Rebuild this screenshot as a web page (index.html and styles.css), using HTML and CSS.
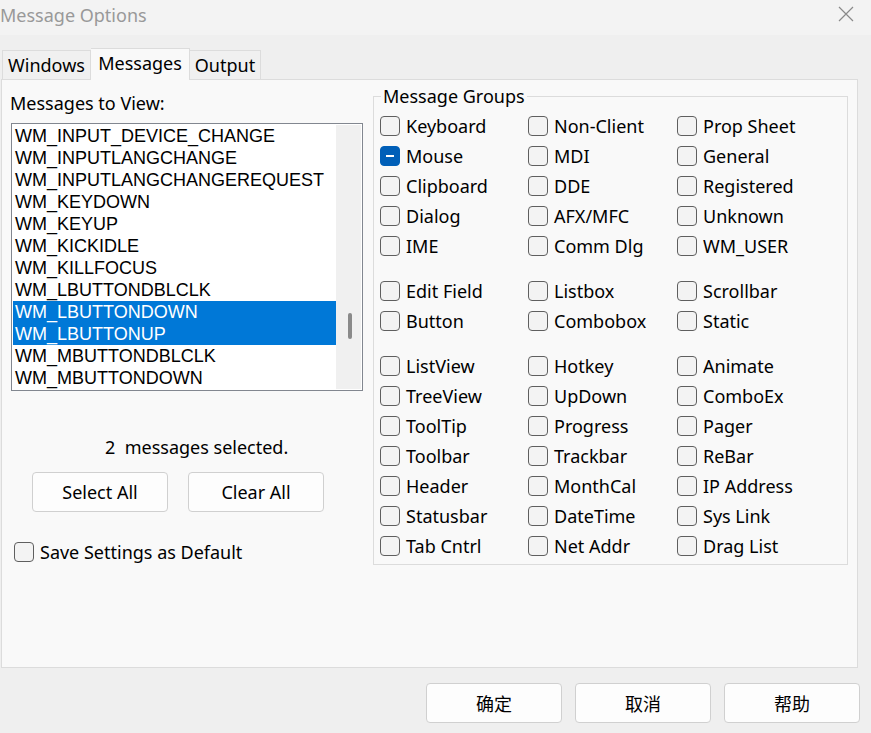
FILE: index.html
```html
<!DOCTYPE html>
<html lang="en">
<head>
    <meta charset="UTF-8">
    <title>Message Options</title>
    <link rel="stylesheet" href="styles.css">
</head>
<body>

    <div class="titlebar">
        <span class="title">Message Options</span>
        <svg class="close" width="16" height="16" viewBox="0 0 16 16">
            <path d="M1 1 L15 15 M15 1 L1 15" stroke="#8a8a8a" stroke-width="1.2" fill="none"/>
        </svg>
    </div>

    <div class="dialog">
        <div class="tabs">
            <div class="tab tab-windows">Windows</div>
            <div class="tab tab-messages active">Messages</div>
            <div class="tab tab-output">Output</div>
        </div>

        <div class="panel">
            <div class="left">
                <div class="label">Messages to View:</div>
                <div class="listbox">
                    <div class="items">
                        <div class="item">WM_INPUT_DEVICE_CHANGE</div>
                        <div class="item">WM_INPUTLANGCHANGE</div>
                        <div class="item">WM_INPUTLANGCHANGEREQUEST</div>
                        <div class="item">WM_KEYDOWN</div>
                        <div class="item">WM_KEYUP</div>
                        <div class="item">WM_KICKIDLE</div>
                        <div class="item">WM_KILLFOCUS</div>
                        <div class="item">WM_LBUTTONDBLCLK</div>
                        <div class="item selected">WM_LBUTTONDOWN</div>
                        <div class="item selected">WM_LBUTTONUP</div>
                        <div class="item">WM_MBUTTONDBLCLK</div>
                        <div class="item">WM_MBUTTONDOWN</div>
                    </div>
                    <div class="scrollbar"><div class="thumb"></div></div>
                </div>
                <div class="count">2&nbsp; messages selected.</div>
                <div class="btn-row">
                    <button class="btn">Select All</button>
                    <button class="btn">Clear All</button>
                </div>
                <label class="check save">
                    <span class="box"></span>
                    <span>Save Settings as Default</span>
                </label>
            </div>

            <fieldset class="groups">
                <legend>Message Groups</legend>

                <div class="grid">
                    <label class="check"><span class="box"></span>Keyboard</label>
                    <label class="check"><span class="box"></span>Non-Client</label>
                    <label class="check"><span class="box"></span>Prop Sheet</label>
                    <label class="check"><span class="box mixed"></span>Mouse</label>
                    <label class="check"><span class="box"></span>MDI</label>
                    <label class="check"><span class="box"></span>General</label>
                    <label class="check"><span class="box"></span>Clipboard</label>
                    <label class="check"><span class="box"></span>DDE</label>
                    <label class="check"><span class="box"></span>Registered</label>
                    <label class="check"><span class="box"></span>Dialog</label>
                    <label class="check"><span class="box"></span>AFX/MFC</label>
                    <label class="check"><span class="box"></span>Unknown</label>
                    <label class="check"><span class="box"></span>IME</label>
                    <label class="check"><span class="box"></span>Comm Dlg</label>
                    <label class="check"><span class="box"></span>WM_USER</label>
                </div>

                <div class="grid">
                    <label class="check"><span class="box"></span>Edit Field</label>
                    <label class="check"><span class="box"></span>Listbox</label>
                    <label class="check"><span class="box"></span>Scrollbar</label>
                    <label class="check"><span class="box"></span>Button</label>
                    <label class="check"><span class="box"></span>Combobox</label>
                    <label class="check"><span class="box"></span>Static</label>
                </div>

                <div class="grid">
                    <label class="check"><span class="box"></span>ListView</label>
                    <label class="check"><span class="box"></span>Hotkey</label>
                    <label class="check"><span class="box"></span>Animate</label>
                    <label class="check"><span class="box"></span>TreeView</label>
                    <label class="check"><span class="box"></span>UpDown</label>
                    <label class="check"><span class="box"></span>ComboEx</label>
                    <label class="check"><span class="box"></span>ToolTip</label>
                    <label class="check"><span class="box"></span>Progress</label>
                    <label class="check"><span class="box"></span>Pager</label>
                    <label class="check"><span class="box"></span>Toolbar</label>
                    <label class="check"><span class="box"></span>Trackbar</label>
                    <label class="check"><span class="box"></span>ReBar</label>
                    <label class="check"><span class="box"></span>Header</label>
                    <label class="check"><span class="box"></span>MonthCal</label>
                    <label class="check"><span class="box"></span>IP Address</label>
                    <label class="check"><span class="box"></span>Statusbar</label>
                    <label class="check"><span class="box"></span>DateTime</label>
                    <label class="check"><span class="box"></span>Sys Link</label>
                    <label class="check"><span class="box"></span>Tab Cntrl</label>
                    <label class="check"><span class="box"></span>Net Addr</label>
                    <label class="check"><span class="box"></span>Drag List</label>
                </div>
            </fieldset>
        </div>

        <div class="footer">
            <button class="btn cjk">确定</button>
            <button class="btn cjk">取消</button>
            <button class="btn cjk">帮助</button>
        </div>
    </div>

</body>
</html>
```

FILE: styles.css
```css
body { margin: 0; background: #efefef; font-family: "Noto Sans", "Noto Sans CJK SC", sans-serif; font-size: 18px; color: #000; width: 871px; height: 733px; overflow: hidden; }

.titlebar { height: 35px; background: #f3f3f3; display: flex; align-items: center; justify-content: space-between; }
.title { color: #999; line-height: 24px; margin-top: -6px; }
.close { margin-right: 17px; margin-top: -7px; }

.dialog { padding-left: 1px; }

.tabs { display: flex; align-items: flex-end; height: 44px; padding-left: 1px; }
.tab { height: 28px; line-height: 28px; text-align: center; border: 1px solid #dcdcdc; border-bottom: none; background: #f0f0f0; box-sizing: content-box; }
.tab-windows { width: 87px; }
.tab-messages { width: 98px; }
.tab-output { width: 70px; border-left: none; }
.tab.active { height: 31px; line-height: 28px; background: #f9f9f9; margin-bottom: -1px; position: relative; border-left: none; }

.panel { display: flex; height: 587px; border: 1px solid #dcdcdc; background: #f9f9f9; padding-left: 8px; box-sizing: content-box; width: 847px; }

.left { width: 353px; padding-top: 11px; }
.label { line-height: 24px; }

.listbox { display: flex; margin: 8px 0 0 1px; width: 348px; height: 264px; padding: 1px; border: 1px solid #828790; background: #fff; font-family: "Liberation Sans", Arial, sans-serif; }
.items { width: 323px; }
.item { height: 22px; line-height: 23px; padding-left: 2px; white-space: nowrap; }
.item.selected { background: #0078d7; color: #fff; }
.scrollbar { width: 25px; background: #f0f0f0; display: flex; justify-content: center; }
.thumb { width: 4px; height: 26px; border-radius: 2px; background: #8a8a8a; margin-top: 188px; margin-left: 2px; }

.count { margin: 44px 0 0 95px; line-height: 24px; }
.btn-row { display: flex; gap: 20px; margin: 13px 0 0 22px; }

.btn { width: 136px; height: 40px; background: #fdfdfd; border: 1px solid #d0d0d0; border-radius: 4px; font-family: inherit; font-size: 18px; color: #000; padding: 0; }

.check { display: flex; align-items: center; gap: 6px; height: 30px; white-space: nowrap; }
.box { width: 18px; height: 18px; border: 1px solid #5f5f5f; border-radius: 4px; background: #f3f3f3; flex: none; position: relative; }
.box.mixed { background: #005fb8; border-color: #005fb8; }
.box.mixed::after { content: ""; position: absolute; left: 5px; top: 8px; width: 8px; height: 2px; background: #fff; }

.save { margin: 25px 0 0 4px; }

.groups { margin: 5px 0 0 10px; width: 467px; align-self: flex-start; border: 1px solid #dcdcdc; padding: 4px 0 3px 6px; box-sizing: content-box; }
.groups legend { padding: 0 2px; margin-left: 1px; line-height: 22px; }
.grid { display: grid; grid-template-columns: 148px 149px 1fr; }
.grid + .grid { margin-top: 15px; }

.footer { display: flex; justify-content: flex-end; gap: 13px; padding: 15px 11px 0 0; }
.footer .btn { width: 136px; }
.cjk { font-family: "Noto Sans CJK SC", sans-serif; }
```
